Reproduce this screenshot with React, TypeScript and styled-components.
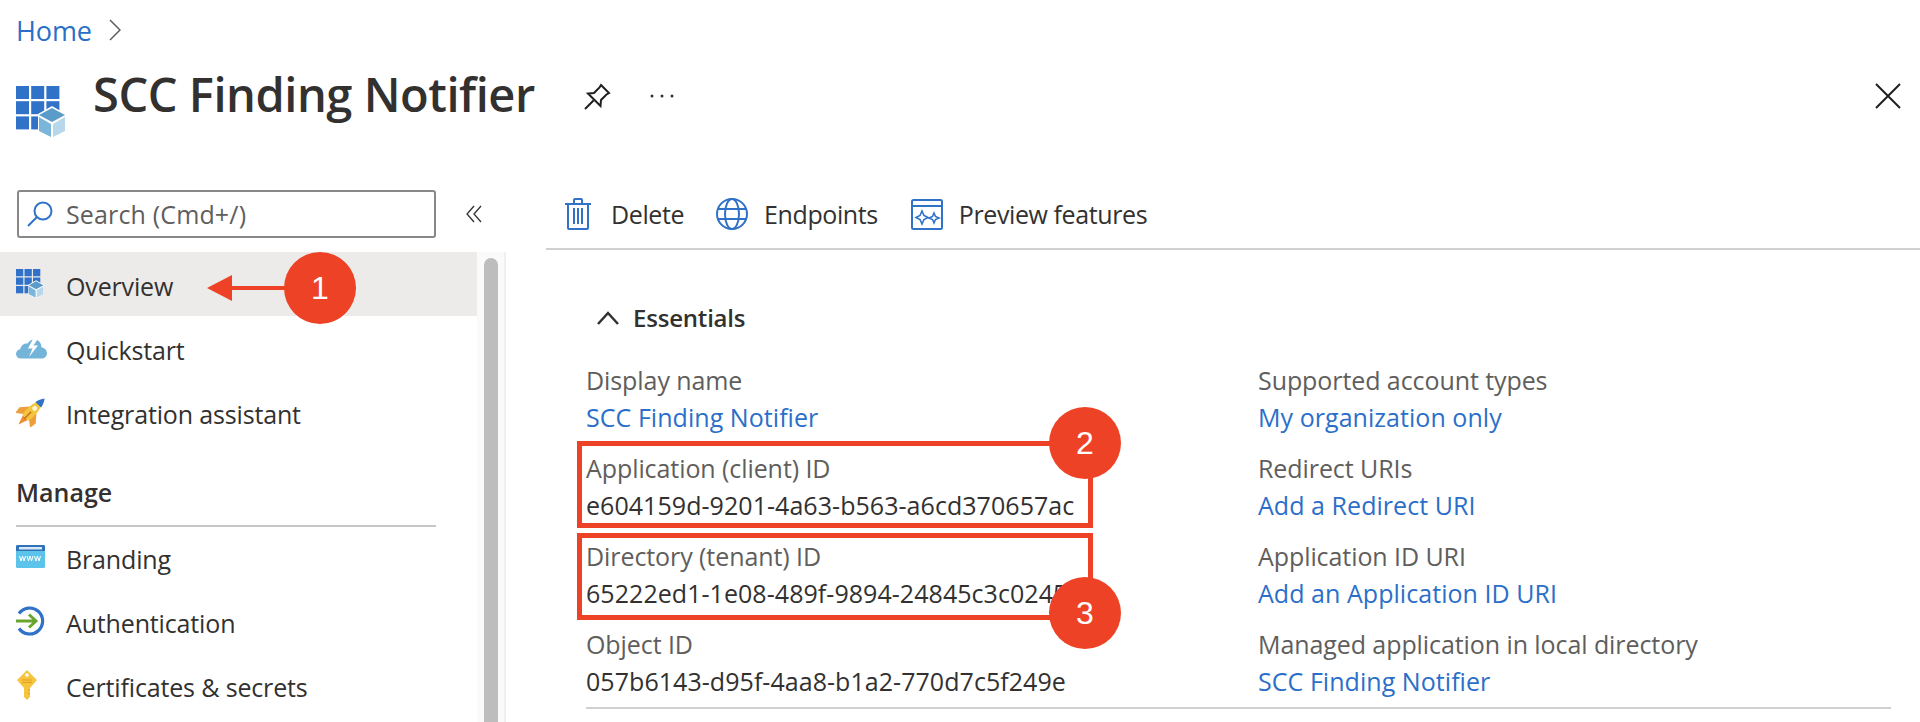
import React from "react";
import styled, { createGlobalStyle } from "styled-components";

const Global = createGlobalStyle`
  html, body {
    margin: 0;
    height: 722px;
    overflow: hidden;
    background: #fff;
    font-family: "Open Sans", "Noto Sans", sans-serif;
    color: #323130;
  }
  * { box-sizing: border-box; }
`;

const Page = styled.div`
  position: relative;
  width: 1920px;
  height: 722px;
  overflow: hidden;
`;

const Breadcrumb = styled.div`
  height: 60px;
  padding: 0 16px 0;
  display: flex;
  align-items: center;
  gap: 17px;
  font-size: 27px;
  letter-spacing: -0.1px;
  color: #2b6fc9;
`;

const Header = styled.div`
  height: 130px;
  padding: 14px 19px 0 16px;
  display: flex;
  align-items: flex-start;
`;

const HeaderIcon = styled.span`
  display: flex;
  margin-top: 12px;
`;

const Title = styled.h1`
  margin: -3px 0 0 27px;
  width: 442px;
  font-size: 47px;
  line-height: 46px;
  font-weight: 600;
  letter-spacing: -0.45px;
  white-space: nowrap;
`;

const HeaderTool = styled.button<{ $gap: number }>`
  border: 0;
  background: none;
  padding: 0;
  margin: 9px 0 0 ${(p) => p.$gap}px;
  display: flex;
`;

const Spacer = styled.div`
  flex: 1;
`;

const Body = styled.div`
  display: grid;
  grid-template-columns: 546px 1fr;
  height: 532px;
`;

const Sidebar = styled.aside`
  display: flex;
  flex-direction: column;
  overflow: hidden;
`;

const SearchRow = styled.div`
  height: 62px;
  padding-left: 17px;
  display: flex;
  align-items: flex-start;
`;

const SearchBox = styled.div`
  width: 419px;
  height: 48px;
  border: 2px solid #8a8886;
  border-radius: 3px;
  display: flex;
  align-items: center;
  padding-left: 8px;
  gap: 13px;
  font-size: 25px;
  letter-spacing: 0.15px;
  color: #605e5c;
`;

const Collapse = styled.span`
  margin: 14px 0 0 30px;
  display: flex;
`;

const NavArea = styled.div`
  display: grid;
  grid-template-columns: 477px 29px;
  flex: 1;
  min-height: 0;
`;

const Nav = styled.nav`
  display: flex;
  flex-direction: column;
`;

const NavItem = styled.div<{ $active?: boolean }>`
  height: 64px;
  flex: none;
  display: flex;
  align-items: center;
  padding: 4px 0 0 16px;
  background: ${(p) => (p.$active ? "#edebe9" : "transparent")};
  font-size: 25px;
  letter-spacing: -0.15px;
`;

const NavIcon = styled.span`
  width: 50px;
  height: 30px;
  flex: none;
  display: flex;
  align-items: center;
  margin-top: -5px;
`;

const NavSection = styled.div`
  height: 83px;
  flex: none;
  margin: 0 41px -2px 16px;
  padding-top: 31px;
  border-bottom: 2px solid #c8c6c4;
  font-size: 25px;
  line-height: 34px;
  font-weight: 600;
`;

const ScrollTrack = styled.div`
  background: #fafafa;
  border-right: 2px solid #f0f0f0;
  padding: 6px 6px 0 7px;
`;

const ScrollThumb = styled.div`
  height: 100%;
  border-radius: 8px 8px 0 0;
  background: #bdbdbd;
`;

const Main = styled.main`
  display: flex;
  flex-direction: column;
`;

const Toolbar = styled.div`
  height: 60px;
  flex: none;
  padding: 0 0 10px 19px;
  border-bottom: 2px solid #d2d0ce;
  display: flex;
  align-items: center;
`;

const ToolButton = styled.div<{ $left: number; $gap: number }>`
  display: flex;
  align-items: center;
  gap: ${(p) => p.$gap}px;
  margin-left: ${(p) => p.$left}px;
  font-size: 25px;
  letter-spacing: -0.4px;
`;

const EssentialsHead = styled.div`
  height: 113px;
  flex: none;
  padding: 50px 0 0 50px;
  display: flex;
  align-items: flex-start;
  gap: 13px;
  font-size: 24px;
  line-height: 36px;
  font-weight: 600;
  letter-spacing: -0.2px;
`;

const Fields = styled.div`
  margin-left: 40px;
  width: 1305px;
  height: 346px;
  border-bottom: 2px solid #d2d0ce;
  display: grid;
  grid-template-columns: 672px 1fr;
`;

const Column = styled.div`
  display: flex;
  flex-direction: column;
`;

const Field = styled.div`
  height: 88px;
  flex: none;
`;

const Label = styled.div`
  height: 36px;
  font-size: 25px;
  line-height: 34px;
  letter-spacing: -0.08px;
  color: #605e5c;
  white-space: nowrap;
`;

const Value = styled.div`
  height: 36px;
  font-size: 25px;
  line-height: 36px;
  letter-spacing: 0.05px;
  white-space: nowrap;
`;

const LinkValue = styled(Value)`
  color: #2b6fc9;
`;

const RedBox = styled.div<{ $top: number }>`
  position: absolute;
  left: 577px;
  top: ${(p) => p.$top}px;
  width: 516px;
  height: 87px;
  border: 5px solid #ee4226;
`;

const Badge = styled.div<{ $x: number; $y: number }>`
  position: absolute;
  left: ${(p) => p.$x - 36}px;
  top: ${(p) => p.$y - 36}px;
  width: 72px;
  height: 72px;
  border-radius: 50%;
  background: #ee4226;
  color: #fff;
  display: flex;
  align-items: center;
  justify-content: center;
  font-family: "Liberation Sans", Arial, sans-serif;
  font-size: 32px;
`;

const Arrow = styled.svg`
  position: absolute;
  left: 207px;
  top: 275px;
`;

const BLUE = "#2f72c8";

const AppGrid = ({ size }: { size: number }) => (
  <svg width={size} height={size * 1.04} viewBox="0 0 50 52">
    {[0, 1, 2].map((r) =>
      [0, 1, 2].map((c) => (
        <rect key={`${r}${c}`} x={c * 15.2} y={r * 15.2} width="13" height="13" fill={BLUE} />
      ))
    )}
    <path d="M22 28 36 20 50 28 50 45 36 52 22 45Z" fill="#fff" />
    <path d="M23 29 36 22 49 29 36 36Z" fill="#5b9bc9" />
    <path d="M23 31 35 38V51L23 45Z" fill="#7ab6da" />
    <path d="M49 31 37 38V51L49 45Z" fill="#b7d7ea" />
  </svg>
);

const CloudBolt = () => (
  <svg width="31" height="22" viewBox="0 0 31 22">
    <path
      d="M5 21.500C2 21.500 0 19.600 0 17c0-2.400 1.800-4.400 4.200-4.700C5 8.500 8 6 11.500 6.600 13.500 3 17.500 1.500 21 3c3 1.300 4.600 4 4.400 7.200 3 .3 5.600 3 5.600 6 0 3-2.400 5.300-5.400 5.300Z"
      fill="#74b4d8"
    />
    <path d="M18 0 12 11.500h4.500L13 20l9-11.500h-4.500L22 1.500Z" fill="#fff" />
  </svg>
);

const Rocket = () => (
  <svg width="31" height="31" viewBox="0 0 31 31">
    <g transform="rotate(45 15.5 15.5)">
      <path d="M12 24H19L15.500 34Z" fill="#ee8f2e" />
      <path d="M11 13 4 21 5 28 11.500 23Z" fill="#ef9f3a" />
      <path d="M20 13 27 21 26 28 19.500 23Z" fill="#ef9f3a" />
      <path d="M15.500 0C19.500 5 21.500 12 20 24H11C9.500 12 11.500 5 15.500 0Z" fill="#f3c53c" />
      <path d="M15.500 -3C17.500 -.5 19 3 19.500 6H11.500C12 3 13.500 -.5 15.500 -3Z" fill="#2f72c8" />
      <circle cx="15.500" cy="11" r="2.500" fill="#fdf4d6" />
      <path d="M15.500 16V26" stroke="#c9741c" strokeWidth="1.500" />
    </g>
  </svg>
);

const Www = () => (
  <svg width="30" height="24" viewBox="0 0 30 24">
    <rect width="29" height="23" rx="1.500" fill="#5cc4ea" />
    <path d="M0 1.500A1.500 1.500 0 0 1 1.500 0h26A1.500 1.500 0 0 1 29 1.500V6H0Z" fill="#2f72b8" />
    <rect x="3" y="2" width="23" height="2.500" fill="#d6e8f6" />
    <path
      d="M3.500 11l1.500 5 1.500-5 1.500 5 1.500-5M11 11l1.500 5 1.500-5 1.500 5 1.500-5M18.500 11l1.500 5 1.500-5 1.500 5 1.500-5"
      fill="none"
      stroke="#fff"
      strokeWidth="1"
    />
  </svg>
);

const AuthIcon = () => (
  <svg width="29" height="30" viewBox="0 0 29 30">
    <path d="M3 7.500A13 13 0 1 1 3 22.500" fill="none" stroke="#2f72c8" strokeWidth="3.200" />
    <path d="M0 15H20M13 8.500 20 15 13 21.500" fill="none" stroke="#6aa52f" strokeWidth="3" />
  </svg>
);

const KeyIcon = () => (
  <svg width="22" height="30" viewBox="0 0 22 30">
    <path d="M1 10 11 0 21 10 14 18V27L11 30 8 27V18Z" fill="#f6c53d" />
    <circle cx="11" cy="5" r="1.800" fill="#fff" />
    <path d="M6 10H16M6 12.500H16" stroke="#e0a11f" strokeWidth="1" />
    <path d="M12 20h2M12 23.500h2" stroke="#e0a11f" strokeWidth="1.200" />
  </svg>
);

const TrashIcon = () => (
  <svg width="26" height="32" viewBox="0 0 26 32" fill="none" stroke={BLUE} strokeWidth="2">
    <path d="M0 6H26M9 5V2C9 1.500 9.500 1 10 1H16C16.500 1 17 1.500 17 2V5" />
    <path d="M3 6V30C3 30.500 3.500 31 4 31H22C22.500 31 23 30.500 23 30V6" />
    <path d="M9 10V26M13 10V26M17 10V26" />
  </svg>
);

const GlobeIcon = () => (
  <svg width="32" height="32" viewBox="0 0 32 32" fill="none" stroke={BLUE} strokeWidth="2">
    <circle cx="16" cy="16" r="15" />
    <ellipse cx="16" cy="16" rx="7" ry="15" />
    <path d="M2 11H30M2 21H30" />
  </svg>
);

const PreviewIcon = () => (
  <svg width="32" height="31" viewBox="0 0 32 31" fill="none" stroke={BLUE} strokeWidth="2">
    <rect x="1" y="1" width="30" height="29" rx="1.500" />
    <path d="M1 7H31" />
    <path d="M11 12 13 16.500 17 18.500 13 20.500 11 25 9 20.500 5 18.500 9 16.500Z" strokeWidth="1.600" />
    <path d="M23 14 24.500 17.500 28 19 24.500 20.500 23 24 21.500 20.500 18 19 21.500 17.500Z" strokeWidth="1.600" />
  </svg>
);

const leftFields = [
  { label: "Display name", value: "SCC Finding Notifier", link: true },
  { label: "Application (client) ID", value: "e604159d-9201-4a63-b563-a6cd370657ac" },
  { label: "Directory (tenant) ID", value: "65222ed1-1e08-489f-9894-24845c3c0245" },
  { label: "Object ID", value: "057b6143-d95f-4aa8-b1a2-770d7c5f249e" },
];

const rightFields = [
  { label: "Supported account types", value: "My organization only", link: true },
  { label: "Redirect URIs", value: "Add a Redirect URI", link: true },
  { label: "Application ID URI", value: "Add an Application ID URI", link: true },
  { label: "Managed application in local directory", value: "SCC Finding Notifier", link: true },
];

const FieldColumn = ({ items }: { items: { label: string; value: string; link?: boolean }[] }) => (
  <Column>
    {items.map((f) => (
      <Field key={f.label}>
        <Label>{f.label}</Label>
        {f.link ? <LinkValue>{f.value}</LinkValue> : <Value>{f.value}</Value>}
      </Field>
    ))}
  </Column>
);

export default function App() {
  return (
    <Page>
      <Global />
      <Breadcrumb>
        Home
        <svg width="12" height="22" viewBox="0 0 12 22" fill="none" stroke="#605e5c" strokeWidth="1.500">
          <path d="M1 1 11 11 1 21" />
        </svg>
      </Breadcrumb>
      <Header>
        <HeaderIcon>
          <AppGrid size={50} />
        </HeaderIcon>
        <Title>SCC Finding Notifier</Title>
        <HeaderTool $gap={48}>
          <svg width="28" height="28" viewBox="0 0 28 28" fill="none" stroke="#201f1e" strokeWidth="2">
            <path d="M18 2 26 10 23.500 11.500 18 17 17.500 23 5 10.500 11 10 16.500 4.500ZM10.500 17.500 2 26" />
          </svg>
        </HeaderTool>
        <HeaderTool $gap={38}>
          <svg width="26" height="28" viewBox="0 0 26 28" fill="#323130">
            <circle cx="3" cy="13" r="1.500" />
            <circle cx="13" cy="13" r="1.500" />
            <circle cx="23" cy="13" r="1.500" />
          </svg>
        </HeaderTool>
        <Spacer />
        <HeaderTool $gap={0}>
          <svg width="26" height="26" viewBox="0 0 26 26" fill="none" stroke="#201f1e" strokeWidth="2">
            <path d="M1 1 25 25M25 1 1 25" />
          </svg>
        </HeaderTool>
      </Header>
      <Body>
        <Sidebar>
          <SearchRow>
            <SearchBox>
              <svg width="26" height="26" viewBox="0 0 26 26" fill="none" stroke={BLUE} strokeWidth="2">
                <circle cx="16" cy="10" r="8.500" />
                <path d="M10 16 1 25" />
              </svg>
              Search (Cmd+/)
            </SearchBox>
            <Collapse>
              <svg width="16" height="20" viewBox="0 0 16 20" fill="none" stroke="#323130" strokeWidth="1.300">
                <path d="M8 2 1 10 8 18M15 2 8 10 15 18" />
              </svg>
            </Collapse>
          </SearchRow>
          <NavArea>
            <Nav>
              <NavItem $active>
                <NavIcon><AppGrid size={28} /></NavIcon>
                Overview
              </NavItem>
              <NavItem>
                <NavIcon><CloudBolt /></NavIcon>
                Quickstart
              </NavItem>
              <NavItem>
                <NavIcon><Rocket /></NavIcon>
                Integration assistant
              </NavItem>
              <NavSection>Manage</NavSection>
              <NavItem>
                <NavIcon><Www /></NavIcon>
                Branding
              </NavItem>
              <NavItem>
                <NavIcon><AuthIcon /></NavIcon>
                Authentication
              </NavItem>
              <NavItem>
                <NavIcon><KeyIcon /></NavIcon>
                Certificates &amp; secrets
              </NavItem>
            </Nav>
            <ScrollTrack>
              <ScrollThumb />
            </ScrollTrack>
          </NavArea>
        </Sidebar>
        <Main>
          <Toolbar>
            <ToolButton $left={0} $gap={20}>
              <TrashIcon />
              Delete
            </ToolButton>
            <ToolButton $left={32} $gap={16}>
              <GlobeIcon />
              Endpoints
            </ToolButton>
            <ToolButton $left={33} $gap={16}>
              <PreviewIcon />
              Preview features
            </ToolButton>
          </Toolbar>
          <EssentialsHead>
            <svg width="24" height="36" viewBox="0 0 24 36" fill="none" stroke="#323130" strokeWidth="2.500">
              <path d="M2 24 12 13 22 24" />
            </svg>
            Essentials
          </EssentialsHead>
          <Fields>
            <FieldColumn items={leftFields} />
            <FieldColumn items={rightFields} />
          </Fields>
        </Main>
      </Body>
      <RedBox $top={441} />
      <RedBox $top={533} />
      <Arrow width="80" height="26" viewBox="0 0 80 26" fill="#ee4226">
        <path d="M0 13 25 0V11H80V15H25V26Z" />
      </Arrow>
      <Badge $x={320} $y={288}>1</Badge>
      <Badge $x={1085} $y={443}>2</Badge>
      <Badge $x={1085} $y={613}>3</Badge>
    </Page>
  );
}
